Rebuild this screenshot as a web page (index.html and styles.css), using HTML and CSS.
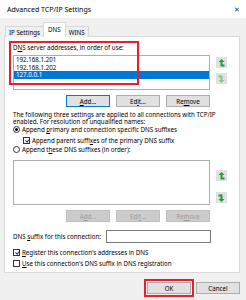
FILE: index.html
```html
<!DOCTYPE html>
<html lang="en">
<head>
    <meta charset="UTF-8">
    <title>Advanced TCP/IP Settings</title>
    <link rel="stylesheet" href="styles.css">
</head>
<body>

    <!-- Barra del titolo -->
    <div class="titlebar">
        <span class="title">Advanced TCP/IP Settings</span>
        <span class="close">&#x2715;</span>
    </div>

    <!-- Schede -->
    <div class="tabs">
        <div class="tab">IP Settings</div>
        <div class="tab active">DNS</div>
        <div class="tab">WINS</div>
    </div>

    <div class="panel">
        <div class="mark mark-dns"></div>

        <div class="caption">D<u>N</u>S server addresses, in order of use:</div>
        <div class="list-row">
            <div class="listbox">
                <div class="item">192.168.1.201</div>
                <div class="item">192.168.1.202</div>
                <div class="item selected">127.0.0.1</div>
            </div>
            <div class="arrows">
                <div class="arrow-btn">
                    <svg width="7" height="8" viewBox="0 0 7 8"><path d="M3.5 0 L6.5 3 L4.5 3 L4.5 5.5 L6.5 5.5 L6.5 7.5 L2.5 7.5 L2.5 3 L0.5 3 Z" fill="#1f9e3a"/></svg>
                </div>
                <div class="arrow-btn">
                    <svg width="7" height="8" viewBox="0 0 7 8"><path d="M3.5 8 L6.5 5 L4.5 5 L4.5 0.5 L0.5 0.5 L0.5 2.5 L2.5 2.5 L2.5 5 L0.5 5 Z" fill="#7ccb8e"/></svg>
                </div>
            </div>
        </div>
        <div class="btn-row">
            <button class="btn default"><u>A</u>dd...</button>
            <button class="btn">Ed<u>i</u>t...</button>
            <button class="btn">Re<u>m</u>ove</button>
        </div>

        <p class="para">The following three settings are applied to all connections with TCP/IP enabled. For resolution of unqualified names:</p>

        <div class="opt"><span class="radio on"></span><span>Append <u>p</u>rimary and connection specific DNS suffixes</span></div>
        <div class="opt sub"><span class="check on"></span><span>Append parent suffi<u>x</u>es of the primary DNS suffix</span></div>
        <div class="opt"><span class="radio"></span><span>Append t<u>h</u>ese DNS suffixes (in order):</span></div>

        <div class="list-row list-row2">
            <div class="listbox tall"></div>
            <div class="arrows arrows2">
                <div class="arrow-btn">
                    <svg width="7" height="8" viewBox="0 0 7 8"><path d="M3.5 0 L6.5 3 L4.5 3 L4.5 5.5 L6.5 5.5 L6.5 7.5 L2.5 7.5 L2.5 3 L0.5 3 Z" fill="#1f9e3a"/></svg>
                </div>
                <div class="arrow-btn">
                    <svg width="7" height="8" viewBox="0 0 7 8"><path d="M3.5 8 L6.5 5 L4.5 5 L4.5 0.5 L0.5 0.5 L0.5 2.5 L2.5 2.5 L2.5 5 L0.5 5 Z" fill="#1f9e3a"/></svg>
                </div>
            </div>
        </div>
        <div class="btn-row btn-row2">
            <button class="btn disabled">A<u>d</u>d...</button>
            <button class="btn disabled">Edi<u>t</u>...</button>
            <button class="btn disabled">Re<u>m</u>ove</button>
        </div>

        <div class="suffix-row">
            <span>DNS <u>s</u>uffix for this connection:</span>
            <div class="input"></div>
        </div>

        <div class="opt reg"><span class="check on"></span><span><u>R</u>egister this connection's addresses in DNS</span></div>
        <div class="opt use"><span class="check"></span><span><u>U</u>se this connection's DNS suffix in DNS registration</span></div>
    </div>

    <!-- Pulsanti finali -->
    <div class="footer">
        <div class="ok-wrap">
            <button class="btn">OK</button>
            <div class="mark mark-ok"></div>
        </div>
        <button class="btn">Cancel</button>
    </div>

</body>
</html>
```

FILE: styles.css
```css
body {
    margin: 0;
    width: 246px;
    height: 300px;
    background-color: #f0f0f0;
    font-family: 'Noto Sans', sans-serif;
    font-size: 6.2px;
    color: #000;
    overflow: hidden;
}

u {
    text-decoration-thickness: 0.5px;
    text-underline-offset: 1px;
}

.titlebar {
    height: 18px;
    background-color: #fff;
    display: flex;
    align-items: center;
    justify-content: space-between;
    padding: 0 7px;
}

.title {
    font-size: 7px;
}

.close {
    font-size: 7px;
    color: #333;
    margin-right: -1px;
}

.tabs {
    display: flex;
    align-items: flex-end;
    height: 15px;
    margin-top: 4px;
    padding-left: 5px;
    margin-bottom: -1px;
    position: relative;
    z-index: 1;
}

.tab {
    height: 11px;
    line-height: 11px;
    padding: 0 3px;
    border: 1px solid #d9d9d9;
    border-bottom: none;
    box-sizing: border-box;
    background-color: #f0f0f0;
}

.tab.active {
    height: 15px;
    line-height: 13px;
    background-color: #fff;
    padding: 0 4px;
    margin: 0 -1px;
}

.panel {
    position: relative;
    margin: 0 6px 0 4px;
    height: 237px;
    box-sizing: border-box;
    background-color: #fff;
    border: 1px solid #d9d9d9;
    padding: 7px 0 0 8px;
}

.mark {
    position: absolute;
    border: 2px solid #e8202e;
    box-sizing: border-box;
}

.mark-dns {
    left: 4px;
    top: 4px;
    width: 130px;
    height: 44px;
}

.caption {
    height: 8px;
    line-height: 8px;
}

.list-row {
    display: flex;
    margin-top: 3px;
}

.listbox {
    width: 197px;
    height: 35px;
    box-sizing: border-box;
    border: 1px solid #adadad;
    background-color: #fff;
}

.listbox.tall {
    height: 45px;
}

.item {
    height: 7.5px;
    line-height: 7.5px;
    padding-left: 2px;
}

.item.selected {
    background-color: #0078d7;
    color: #fff;
}

.arrows {
    display: flex;
    flex-direction: column;
    gap: 5px;
    margin-left: 6px;
    padding-top: 2px;
}

.arrows2 {
    padding-top: 10px;
    gap: 11px;
}

.arrow-btn {
    width: 11px;
    height: 11px;
    background-color: #e1e1e1;
    display: flex;
    align-items: center;
    justify-content: center;
}

.btn-row {
    display: flex;
    justify-content: flex-end;
    gap: 6px;
    width: 197px;
    margin-top: 5px;
}

.btn {
    width: 44px;
    height: 12px;
    padding: 0;
    font-family: inherit;
    font-size: 6.2px;
    color: #000;
    background-color: #e1e1e1;
    border: 1px solid #adadad;
    box-sizing: border-box;
}

.btn.default {
    border-color: #0078d7;
}

.btn.disabled {
    background-color: #cccccc;
    border-color: #bfbfbf;
    color: #9a9a9a;
}

.para {
    margin: 4px 0 0 0;
    line-height: 7px;
    width: 218px;
}

.opt {
    display: flex;
    align-items: center;
    height: 9px;
}

.opt.sub {
    margin-top: 2px;
    padding-left: 10px;
}

.radio,
.check {
    width: 5px;
    height: 5px;
    border: 1px solid #333;
    background-color: #fff;
    margin-right: 2px;
    position: relative;
    flex-shrink: 0;
}

.radio {
    border-radius: 50%;
}

.radio.on::after {
    content: '';
    position: absolute;
    left: 1px;
    top: 1px;
    width: 3px;
    height: 3px;
    border-radius: 50%;
    background-color: #000;
}

.check.on::after {
    content: '';
    position: absolute;
    left: 1.5px;
    top: 0;
    width: 1.5px;
    height: 3px;
    border: solid #333;
    border-width: 0 0.8px 0.8px 0;
    transform: rotate(40deg);
}

.list-row2 {
    margin-top: 6px;
}

.btn-row2 {
    margin-top: 5px;
}

.suffix-row {
    display: flex;
    align-items: center;
    justify-content: space-between;
    width: 198px;
    margin-top: 8px;
}

.input {
    width: 105px;
    height: 13px;
    box-sizing: border-box;
    border: 1px solid #7a7a7a;
    background-color: #fff;
}

.opt.reg {
    margin-top: 5px;
}

.opt.use {
    margin-top: 2px;
}

.footer {
    display: flex;
    justify-content: flex-end;
    gap: 5px;
    margin-top: 9px;
    padding-right: 6px;
}

.ok-wrap {
    position: relative;
}

.mark-ok {
    left: -3px;
    top: -3px;
    width: 50px;
    height: 18px;
}
```
